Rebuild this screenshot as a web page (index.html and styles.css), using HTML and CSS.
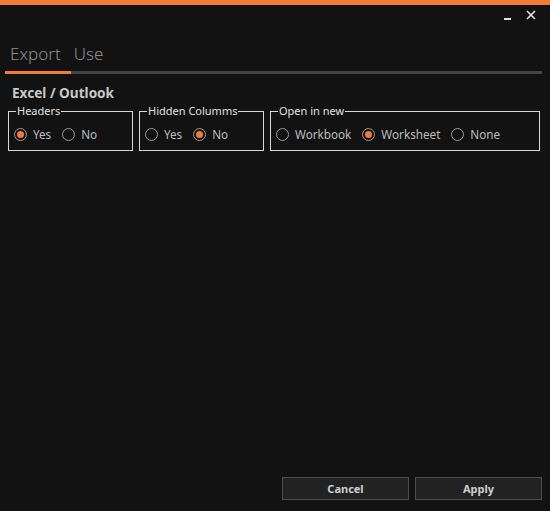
FILE: index.html
```html
<!DOCTYPE html>
<html>
<head>
<meta charset="utf-8">
<link rel="stylesheet" href="styles.css">
</head>
<body>
<div class="window">
  <div class="accent"></div>
  <div class="titlebar">
    <span class="ctl min" aria-label="Minimize"></span>
    <span class="ctl close" aria-label="Close">
      <svg width="10" height="10" viewBox="0 0 10 10"><path d="M1 1L9 9M9 1L1 9" stroke="#e6e6e6" stroke-width="1.6"/></svg>
    </span>
  </div>
  <div class="tabs">
    <span class="tab active">Export</span>
    <span class="tab">Use</span>
  </div>
  <div class="tabline"><div class="tabline-active"></div></div>
  <div class="content">
    <div class="heading">Excel / Outlook</div>
    <div class="groups">
      <fieldset class="group g-small">
        <legend>Headers</legend>
        <label class="radio"><span class="dot checked"></span>Yes</label>
        <label class="radio"><span class="dot"></span>No</label>
      </fieldset>
      <fieldset class="group g-small">
        <legend>Hidden Columms</legend>
        <label class="radio"><span class="dot"></span>Yes</label>
        <label class="radio"><span class="dot checked"></span>No</label>
      </fieldset>
      <fieldset class="group g-wide">
        <legend>Open in new</legend>
        <label class="radio"><span class="dot"></span>Workbook</label>
        <label class="radio"><span class="dot checked"></span>Worksheet</label>
        <label class="radio"><span class="dot"></span>None</label>
      </fieldset>
    </div>
  </div>
  <div class="footer">
    <button class="btn">Cancel</button>
    <button class="btn">Apply</button>
  </div>
</div>
</body>
</html>
```
FILE: styles.css
```css
html, body {
  margin: 0;
  padding: 0;
  background: #121212;
}
body {
  font-family: "Noto Sans", "Open Sans", sans-serif;
  color: #cfcfcf;
}
.window {
  width: 550px;
  height: 511px;
  display: flex;
  flex-direction: column;
  background: #121212;
}
.accent {
  height: 5px;
  background: #f47a38;
}
.titlebar {
  height: 20px;
  display: flex;
  justify-content: flex-end;
  align-items: center;
  padding: 0 14px 0 0;
  gap: 14px;
}
.ctl {
  display: inline-flex;
  width: 10px;
  height: 10px;
  position: relative;
}
.ctl.min::after {
  content: "";
  position: absolute;
  left: 2px;
  top: 8px;
  width: 7px;
  height: 2px;
  background: #e6e6e6;
}
.tabs {
  display: flex;
  gap: 13px;
  padding: 17px 0 0 10px;
  height: 29px;
}
.tab {
  font-family: "Noto Sans", sans-serif;
  font-weight: 300;
  font-size: 17px;
  color: #8f8f8f;
  line-height: 24px;
}
.tabline {
  margin: 0 8px 0 5px;
  height: 3px;
  background: #444444;
}
.tabline-active {
  width: 66px;
  height: 3px;
  background: #f47a38;
}
.content {
  padding: 11px 8px 0 8px;
}
.heading {
  font-weight: 700;
  font-size: 13.6px;
  color: #c8c8c8;
  padding-left: 4px;
  line-height: 16px;
}
.groups {
  display: flex;
  gap: 6px;
  margin-top: 3px;
}
.group {
  margin: 0;
  border: 1px solid #d8d8d8;
  padding: 6px 0 6px 5px;
  display: flex;
  gap: 11px;
  height: 47px;
  box-sizing: border-box;
  align-items: center;
}
.group legend {
  font-size: 11px;
  color: #e0e0e0;
  padding: 0 1px;
  margin-left: 2px;
  line-height: 14px;
}
.g-small { width: 125px; }
.g-wide { width: 270px; }
.radio {
  display: inline-flex;
  align-items: center;
  gap: 6px;
  font-size: 11.7px;
  color: #bdbdbd;
}
.dot {
  width: 13px;
  height: 13px;
  border: 1px solid #9a9a9a;
  border-radius: 50%;
  box-sizing: border-box;
  display: inline-flex;
  align-items: center;
  justify-content: center;
}
.dot.checked::after {
  content: "";
  width: 7px;
  height: 7px;
  border-radius: 50%;
  background: #f47a38;
}
.footer {
  margin-top: auto;
  display: flex;
  justify-content: flex-end;
  gap: 6px;
  padding: 0 8px 11px 0;
}
.btn {
  width: 127px;
  height: 23px;
  background: #222222;
  border: 1px solid #4e4e4e;
  color: #cfcfcf;
  font-family: "Noto Sans", sans-serif;
  font-weight: 700;
  font-size: 11px;
  padding: 0;
}
```
